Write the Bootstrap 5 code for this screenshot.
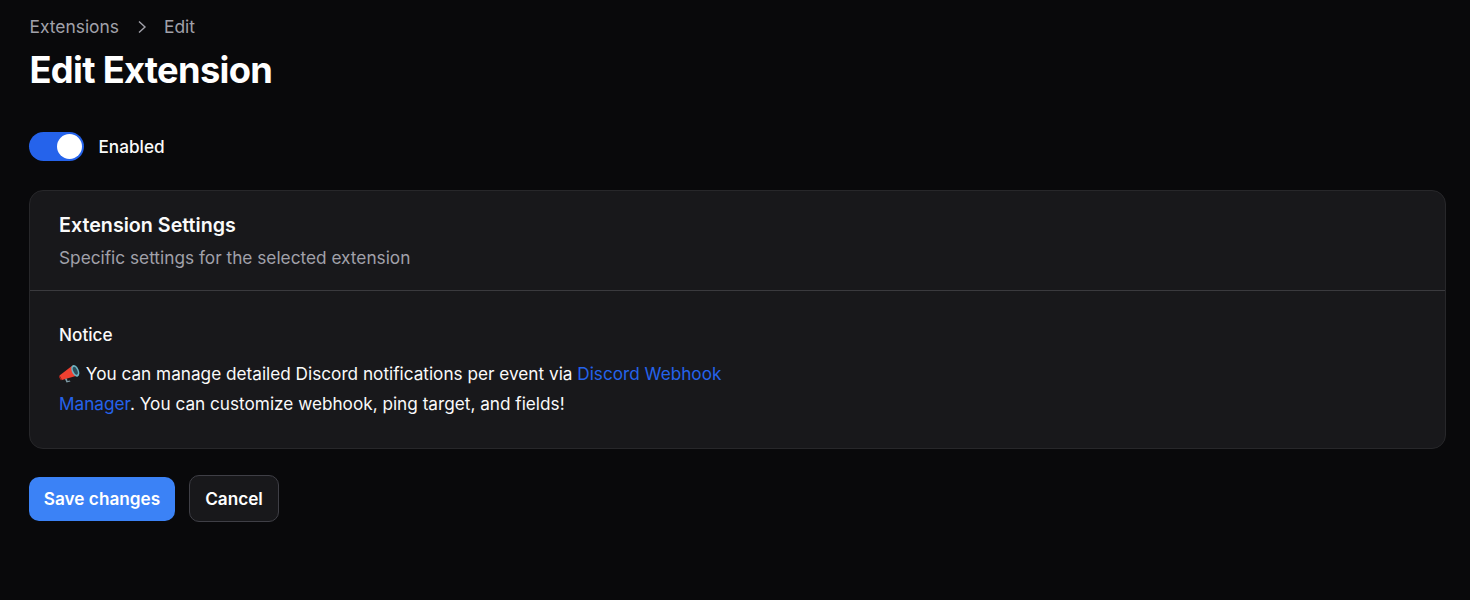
<!DOCTYPE html>
<html lang="en">
<head>
<meta charset="utf-8">
<title>Edit Extension</title>
<link href="https://cdn.jsdelivr.net/npm/bootstrap@5.3.0/dist/css/bootstrap.min.css" rel="stylesheet">
<style>
html,body{height:100%}
body{background:#09090b;color:#fafafa;font-family:Inter,"Liberation Sans",sans-serif;font-size:17.2px;margin:0}
.page-wrap{padding:14px 24.5px 0 29px;height:600px;overflow:hidden}
.crumbs{color:#a1a1aa;height:25px;line-height:25px;gap:17.5px;font-size:17.4px;padding-left:.5px}
.page-title{font-size:36.3px;font-weight:700;letter-spacing:-.7px;line-height:40px;color:#fff;margin:11px 0 0;padding-left:.5px}
.switch-row{margin-top:41.5px;gap:15px;height:30px;font-weight:500;font-size:17.2px}
.toggle-track{width:54.5px;height:29px;border-radius:15px;background:#2563eb;position:relative;display:block}
.toggle-knob{position:absolute;right:2px;top:2px;width:25px;height:25px;border-radius:50%;background:#fff}
.ext-card{margin-top:28.5px;background:#18181b;border:1px solid #27272a;border-radius:14px;height:259px}
.ext-head{padding:19px 29px 0;height:99.5px;border-bottom:1px solid #3a3a3e}
.ext-title{font-size:19.7px;font-weight:600;line-height:30px;color:#fafafa;margin:0}
.ext-sub{color:#a1a1aa;font-size:17.25px;line-height:25px;margin:5px 0 0}
.ext-body{padding:29.5px 29px 0}
.notice-label{font-weight:500;line-height:30px;margin-bottom:9px}
.notice-text{max-width:680px;line-height:29.6px;margin:0}
.notice-text a{color:#2563eb;text-decoration:none}
.notice-text svg{vertical-align:-3px;width:22px;height:19px}
.actions{margin-top:26px;gap:14px}
.btn-save,.btn-quit{font-weight:600;font-size:17.2px;border-radius:10px;color:#fff;padding:0;display:flex;align-items:center;justify-content:center}
.btn-save{width:146px;height:44px;background:#3b82f6;border:0}
.btn-quit{width:90px;height:47px;background:#18181b;border:1px solid #3f3f46}
.btn-save:hover{background:#3b82f6;color:#fff}
.btn-quit:hover{background:#18181b;color:#fff}
</style>
</head>
<body>
<div class="page-wrap">
  <nav class="crumbs d-flex align-items-center">
    <span>Extensions</span>
    <svg width="10" height="14" viewBox="0 0 10 14" fill="none" stroke="#a1a1aa" stroke-width="1.4"><path d="M2 1.500 8 7l-6 5.500"/></svg>
    <span>Edit</span>
  </nav>
  <h1 class="page-title">Edit Extension</h1>
  <div class="switch-row d-flex align-items-center">
    <span class="toggle-track"><span class="toggle-knob"></span></span>
    <span>Enabled</span>
  </div>
  <div class="ext-card">
    <div class="ext-head">
      <h2 class="ext-title">Extension Settings</h2>
      <p class="ext-sub">Specific settings for the selected extension</p>
    </div>
    <div class="ext-body">
      <div class="notice-label">Notice</div>
      <p class="notice-text"><svg viewBox="0 0 22 19"><path d="M.5 11.500 13.500 1.500l5 10L3 16z" fill="#ef4030"/><path d="M.5 11.500 3 16l-1.200.3L0 13z" fill="#b8271f"/><path d="M6 15l1.500 3.400 4-1-.8-1-2.200.5-.6-2.300z" fill="#7e9aa5"/><ellipse cx="16.300" cy="6.800" rx="3.500" ry="6.200" transform="rotate(-24 16.300 6.800)" fill="#6db2c2"/><ellipse cx="16.300" cy="6.800" rx="2" ry="4.200" transform="rotate(-24 16.300 6.800)" fill="#2b4e5a"/></svg> You can manage detailed Discord notifications per event via <a href="#">Discord Webhook Manager</a>. You can customize webhook, ping target, and fields!</p>
    </div>
  </div>
  <div class="actions d-flex align-items-center">
    <button class="btn btn-save">Save changes</button>
    <button class="btn btn-quit">Cancel</button>
  </div>
</div>
<script src="https://cdn.jsdelivr.net/npm/bootstrap@5.3.0/dist/js/bootstrap.bundle.min.js"></script>
</body>
</html>
